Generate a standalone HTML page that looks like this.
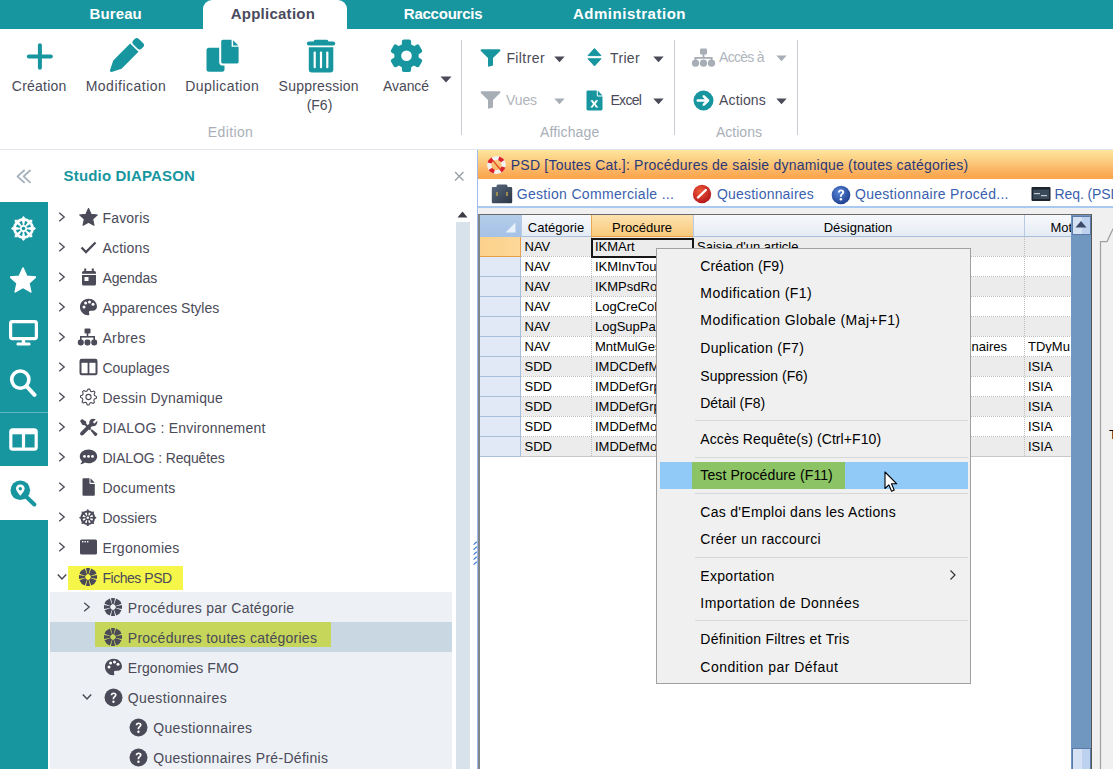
<!DOCTYPE html>
<html><head><meta charset="utf-8"><style>
html,body{margin:0;padding:0;}
body{width:1113px;height:769px;position:relative;overflow:hidden;background:#fff;font-family:"Liberation Sans",sans-serif;}
.t{position:absolute;white-space:nowrap;}
.b{position:absolute;display:block;}
</style></head><body>
<div class="b" style="left:0px;top:0px;width:1113px;height:28.6px;background:#1896a0;"></div>
<div class="b" style="left:203px;top:0px;width:144px;height:29px;background:#fff;border-radius:9px 9px 0 0;"></div>
<div class="t" style="left:-34.3px;width:300px;text-align:center;top:6.10px;font-size:15px;color:#fff;font-weight:700;line-height:15px;letter-spacing:0.12px;">Bureau</div>
<div class="t" style="left:122.89999999999998px;width:300px;text-align:center;top:6.10px;font-size:15px;color:#4a4a5e;font-weight:700;line-height:15px;letter-spacing:0.26px;">Application</div>
<div class="t" style="left:293.1px;width:300px;text-align:center;top:6.10px;font-size:15px;color:#fff;font-weight:700;line-height:15px;letter-spacing:-0.23px;">Raccourcis</div>
<div class="t" style="left:479.5px;width:300px;text-align:center;top:6.10px;font-size:15px;color:#fff;font-weight:700;line-height:15px;letter-spacing:0.51px;">Administration</div>
<div class="b" style="left:0px;top:149px;width:1113px;height:1px;background:#dfe5ea;"></div>
<svg class="b" style="left:26px;top:43px;" width="28" height="28" viewBox="0 0 28 28"><rect x="0.8" y="11.4" width="26" height="4" rx="2" fill="#1896a0"/><rect x="11.9" y="0.3" width="4" height="26.5" rx="2" fill="#1896a0"/></svg>
<div class="t" style="left:-110.8px;width:300px;text-align:center;top:78.95px;font-size:14px;color:#4a4a58;font-weight:400;line-height:14px;letter-spacing:0.235px;">Création</div>
<svg class="b" style="left:108px;top:37px;" width="37" height="37" viewBox="-18.5 -18.5 37 37"><g transform="translate(-0.6 0.6) rotate(45)" fill="#1896a0"><rect x="-5.9" y="-21.3" width="11.8" height="7.8" rx="3"/><path d="M-5.9 -11.9 H5.9 V12 L1.2 21.3 Q0 22.8 -1.2 21.3 L-5.9 12 Z"/></g></svg>
<div class="t" style="left:-24px;width:300px;text-align:center;top:78.95px;font-size:14px;color:#4a4a58;font-weight:400;line-height:14px;letter-spacing:0.5px;">Modification</div>
<svg class="b" style="left:205px;top:38px;" width="36" height="36" viewBox="0 0 36 36"><rect x="1.5" y="9.8" width="18" height="24" rx="2.5" fill="#1896a0"/><path d="M15.2 0.8 H26.8 L34.6 8.6 V23.9 Q34.6 26.6 31.9 26.6 H17.9 Q15.2 26.6 15.2 23.9 V3.5 Q15.2 0.8 17.9 0.8 Z" fill="#1896a0" stroke="#fff" stroke-width="2"/><path d="M26.6 1.3 L34.1 8.8 H26.6 Z" fill="#fff"/><path d="M28.1 2.2 L33.3 7.4 H28.1 Z" fill="#1896a0"/></svg>
<div class="t" style="left:72.19999999999999px;width:300px;text-align:center;top:78.95px;font-size:14px;color:#4a4a58;font-weight:400;line-height:14px;letter-spacing:0.43px;">Duplication</div>
<svg class="b" style="left:305px;top:38px;" width="32" height="36" viewBox="0 0 32 36"><rect x="1.9" y="3.5" width="28.3" height="4.1" rx="2" fill="#1896a0"/><rect x="8.8" y="1.7" width="14.5" height="4" rx="1.5" fill="#1896a0"/><path d="M3.8 9.2 H28.3 V31.4 Q28.3 34.4 25.3 34.4 H6.8 Q3.8 34.4 3.8 31.4 Z" fill="#1896a0"/><rect x="8.6" y="13.6" width="2.2" height="16.6" rx="1" fill="#fff"/><rect x="14.9" y="13.6" width="2.2" height="16.6" rx="1" fill="#fff"/><rect x="21.2" y="13.6" width="2.2" height="16.6" rx="1" fill="#fff"/></svg>
<div class="t" style="left:168.7px;width:300px;text-align:center;top:78.95px;font-size:14px;color:#4a4a58;font-weight:400;line-height:14px;letter-spacing:0.216px;">Suppression</div>
<div class="t" style="left:169.5px;width:300px;text-align:center;top:98.15px;font-size:14px;color:#4a4a58;font-weight:400;line-height:14px;">(F6)</div>
<svg class="b" style="left:389px;top:38px;" width="35" height="36" viewBox="-17.5 -17.8 35 36"><g fill="#1896a0"><circle r="12.2"/><rect x="-4.6" y="-16.3" width="9.2" height="10" rx="2" transform="rotate(0)"/><rect x="-4.6" y="-16.3" width="9.2" height="10" rx="2" transform="rotate(60)"/><rect x="-4.6" y="-16.3" width="9.2" height="10" rx="2" transform="rotate(120)"/><rect x="-4.6" y="-16.3" width="9.2" height="10" rx="2" transform="rotate(180)"/><rect x="-4.6" y="-16.3" width="9.2" height="10" rx="2" transform="rotate(240)"/><rect x="-4.6" y="-16.3" width="9.2" height="10" rx="2" transform="rotate(300)"/></g><circle r="5.3" fill="#fff"/></svg>
<div class="t" style="left:256px;width:300px;text-align:center;top:78.95px;font-size:14px;color:#4a4a58;font-weight:400;line-height:14px;letter-spacing:-0.07px;">Avancé</div>
<svg class="b" style="left:440px;top:76px;" width="12" height="7" viewBox="0 0 12 7"><path d="M0.5 0.5 H11.5 L6 6.5 Z" fill="#4a4a58"/></svg>
<div class="b" style="left:461px;top:40px;width:1px;height:95px;background:#c9ccd2;"></div>
<div class="b" style="left:674px;top:40px;width:1px;height:95px;background:#c9ccd2;"></div>
<div class="b" style="left:797px;top:40px;width:1px;height:95px;background:#c9ccd2;"></div>
<div class="t" style="left:80.5px;width:300px;text-align:center;top:125.15px;font-size:14px;color:#a9afb8;font-weight:400;line-height:14px;letter-spacing:0.37px;">Edition</div>
<div class="t" style="left:419.70000000000005px;width:300px;text-align:center;top:125.15px;font-size:14px;color:#a9afb8;font-weight:400;line-height:14px;letter-spacing:0.13px;">Affichage</div>
<div class="t" style="left:589px;width:300px;text-align:center;top:125.15px;font-size:14px;color:#a9afb8;font-weight:400;line-height:14px;">Actions</div>
<svg class="b" style="left:480px;top:48.5px;" width="21" height="18" viewBox="0 0 21 18"><path d="M0.6 1.2 Q0.6 0.3 1.6 0.3 H19.4 Q20.4 0.3 20.4 1.2 Q20.4 1.8 19.9 2.3 L13 9 V15.5 Q13 16.3 12.4 16.8 L9.2 17.6 Q8 17.9 8 16.7 V9 L1.1 2.3 Q0.6 1.8 0.6 1.2 Z" fill="#1896a0"/></svg>
<div class="t" style="left:506.4px;top:50.75px;font-size:14px;color:#4a4a58;font-weight:400;line-height:14px;letter-spacing:0.4px;">Filtrer</div>
<svg class="b" style="left:554px;top:55.5px;" width="11" height="7" viewBox="0 0 11 7"><path d="M0.3 0.5 H10.7 L5.5 6.3 Z" fill="#4a4a58"/></svg>
<svg class="b" style="left:587px;top:48px;" width="15" height="19" viewBox="0 0 15 19"><path d="M7.5 0.6 L14 7.6 H1 Z M1 10.8 H14 L7.5 17.9 Z" fill="#1896a0" stroke="#1896a0" stroke-width="1" stroke-linejoin="round"/></svg>
<div class="t" style="left:610px;top:50.75px;font-size:14px;color:#4a4a58;font-weight:400;line-height:14px;letter-spacing:0.35px;">Trier</div>
<svg class="b" style="left:653px;top:55.5px;" width="11" height="7" viewBox="0 0 11 7"><path d="M0.3 0.5 H10.7 L5.5 6.3 Z" fill="#4a4a58"/></svg>
<svg class="b" style="left:480px;top:91px;" width="21" height="18" viewBox="0 0 21 18"><path d="M0.6 1.2 Q0.6 0.3 1.6 0.3 H19.4 Q20.4 0.3 20.4 1.2 Q20.4 1.8 19.9 2.3 L13 9 V15.5 Q13 16.3 12.4 16.8 L9.2 17.6 Q8 17.9 8 16.7 V9 L1.1 2.3 Q0.6 1.8 0.6 1.2 Z" fill="#a8aeb6"/></svg>
<div class="t" style="left:506px;top:92.65px;font-size:14px;color:#b0b5bc;font-weight:400;line-height:14px;letter-spacing:-0.1px;">Vues</div>
<svg class="b" style="left:554px;top:97.5px;" width="11" height="7" viewBox="0 0 11 7"><path d="M0.3 0.5 H10.7 L5.5 6.3 Z" fill="#a8aeb6"/></svg>
<svg class="b" style="left:586px;top:89.5px;" width="17" height="21" viewBox="0 0 17 21"><path d="M0.5 1.8 Q0.5 0.4 1.9 0.4 H10.8 V5.2 Q10.8 6.5 12 6.5 H16.5 V19 Q16.5 20.4 15.1 20.4 H1.9 Q0.5 20.4 0.5 19 Z M11.8 0.4 L16.5 5.4 H11.8 Z" fill="#1896a0"/><path d="M4.4 10.3 H6.9 L8.3 12.6 L9.7 10.3 H12.2 L9.6 13.9 L12.4 17.4 H9.9 L8.3 15 L6.7 17.4 H4.2 L7 13.9 Z" fill="#fff"/></svg>
<div class="t" style="left:610.5px;top:92.95px;font-size:14px;color:#4a4a58;font-weight:400;line-height:14px;letter-spacing:-0.72px;">Excel</div>
<svg class="b" style="left:653px;top:97.5px;" width="11" height="7" viewBox="0 0 11 7"><path d="M0.3 0.5 H10.7 L5.5 6.3 Z" fill="#4a4a58"/></svg>
<svg class="b" style="left:691px;top:48px;" width="25" height="19" viewBox="0 0 25 19"><g fill="#a8aeb6"><rect x="9" y="0.5" width="7" height="6" rx="1.2"/><rect x="11.6" y="6" width="1.8" height="4"/><rect x="3.6" y="9" width="17.8" height="1.8"/><rect x="3.6" y="9" width="1.8" height="4"/><rect x="19.6" y="9" width="1.8" height="4"/><circle cx="4.5" cy="15.2" r="3.6"/><circle cx="12.5" cy="15.2" r="3.6"/><circle cx="20.5" cy="15.2" r="3.6"/></g></svg>
<div class="t" style="left:719px;top:50.15px;font-size:14px;color:#b0b5bc;font-weight:400;line-height:14px;letter-spacing:-0.69px;">Accès à</div>
<svg class="b" style="left:776px;top:54.5px;" width="11" height="7" viewBox="0 0 11 7"><path d="M0.3 0.5 H10.7 L5.5 6.3 Z" fill="#a8aeb6"/></svg>
<svg class="b" style="left:692.5px;top:89.5px;" width="21" height="21" viewBox="0 0 21 21"><circle cx="10.5" cy="10.5" r="10" fill="#1896a0"/><path d="M4.8 10.5 H14.8 M10.8 6.3 L15 10.5 L10.8 14.7" stroke="#fff" stroke-width="2.6" fill="none" stroke-linecap="round" stroke-linejoin="round"/></svg>
<div class="t" style="left:719px;top:93.15px;font-size:14px;color:#4a4a58;font-weight:400;line-height:14px;letter-spacing:0.15px;">Actions</div>
<svg class="b" style="left:776px;top:97.5px;" width="11" height="7" viewBox="0 0 11 7"><path d="M0.3 0.5 H10.7 L5.5 6.3 Z" fill="#4a4a58"/></svg>
<svg class="b" style="left:15px;top:168px;" width="17" height="17" viewBox="0 0 17 17"><path d="M9.1 2.5 L2.5 8.4 L9.1 14.3 M15 2.5 L8.6 8.4 L15 14.3" fill="none" stroke="#a4b0bc" stroke-width="1.8" stroke-linecap="round" stroke-linejoin="round"/></svg>
<div class="t" style="left:63.6px;top:168.30px;font-size:15px;color:#1896a0;font-weight:700;line-height:15px;letter-spacing:0.167px;">Studio DIAPASON</div>
<svg class="b" style="left:453.5px;top:171px;" width="10.5" height="10.5" viewBox="0 0 10 10"><path d="M1 1 L9 9 M9 1 L1 9" stroke="#9aa0a8" stroke-width="1.3"/></svg>
<div class="b" style="left:0px;top:202px;width:48px;height:264px;background:#1896a0;"></div>
<div class="b" style="left:0px;top:412px;width:48px;height:1px;background:#5fb8bf;"></div>
<div class="b" style="left:0px;top:520px;width:48px;height:249px;background:#1896a0;"></div>
<svg class="b" style="left:10.7px;top:215.7px;" width="25" height="25" viewBox="-12.5 -12.5 25 25"><g fill="#fff"><circle r="10.40"/><path d="M-2.20 -10.00 L0 -12.50 L2.20 -10.00 Z" transform="rotate(0)"/><path d="M-2.20 -10.00 L0 -12.50 L2.20 -10.00 Z" transform="rotate(45)"/><path d="M-2.20 -10.00 L0 -12.50 L2.20 -10.00 Z" transform="rotate(90)"/><path d="M-2.20 -10.00 L0 -12.50 L2.20 -10.00 Z" transform="rotate(135)"/><path d="M-2.20 -10.00 L0 -12.50 L2.20 -10.00 Z" transform="rotate(180)"/><path d="M-2.20 -10.00 L0 -12.50 L2.20 -10.00 Z" transform="rotate(225)"/><path d="M-2.20 -10.00 L0 -12.50 L2.20 -10.00 Z" transform="rotate(270)"/><path d="M-2.20 -10.00 L0 -12.50 L2.20 -10.00 Z" transform="rotate(315)"/></g><g fill="#1896a0"><path d="M0.69 -3.53 L1.45 -7.46 A7.6 7.6 0 0 1 4.25 -6.30 L2.01 -2.98 A3.6 3.6 0 0 0 0.69 -3.53 Z"/><path d="M2.98 -2.01 L6.30 -4.25 A7.6 7.6 0 0 1 7.46 -1.45 L3.53 -0.69 A3.6 3.6 0 0 0 2.98 -2.01 Z"/><path d="M3.53 0.69 L7.46 1.45 A7.6 7.6 0 0 1 6.30 4.25 L2.98 2.01 A3.6 3.6 0 0 0 3.53 0.69 Z"/><path d="M2.01 2.98 L4.25 6.30 A7.6 7.6 0 0 1 1.45 7.46 L0.69 3.53 A3.6 3.6 0 0 0 2.01 2.98 Z"/><path d="M-0.69 3.53 L-1.45 7.46 A7.6 7.6 0 0 1 -4.25 6.30 L-2.01 2.98 A3.6 3.6 0 0 0 -0.69 3.53 Z"/><path d="M-2.98 2.01 L-6.30 4.25 A7.6 7.6 0 0 1 -7.46 1.45 L-3.53 0.69 A3.6 3.6 0 0 0 -2.98 2.01 Z"/><path d="M-3.53 -0.69 L-7.46 -1.45 A7.6 7.6 0 0 1 -6.30 -4.25 L-2.98 -2.01 A3.6 3.6 0 0 0 -3.53 -0.69 Z"/><path d="M-2.01 -2.98 L-4.25 -6.30 A7.6 7.6 0 0 1 -1.45 -7.46 L-0.69 -3.53 A3.6 3.6 0 0 0 -2.01 -2.98 Z"/><circle r="1.80"/></g></svg>
<svg class="b" style="left:10px;top:267px;" width="26" height="26" viewBox="0 0 26 26"><path d="M13.00,1.00 L16.64,9.18 L25.55,10.12 L18.90,16.12 L20.76,24.88 L13.00,20.40 L5.24,24.88 L7.10,16.12 L0.45,10.12 L9.36,9.18 Z" fill="#fff" stroke="#fff" stroke-width="1.6" stroke-linejoin="round"/></svg>
<svg class="b" style="left:8.5px;top:320px;" width="29" height="27" viewBox="0 0 29 27"><rect x="1.6" y="1.6" width="25.8" height="17" rx="1.8" fill="none" stroke="#fff" stroke-width="3.2"/><rect x="12.8" y="19" width="3.4" height="4.5" fill="#fff"/><rect x="7.5" y="22.5" width="14" height="3" rx="1.3" fill="#fff"/></svg>
<svg class="b" style="left:9px;top:368px;" width="28" height="31" viewBox="0 0 28 31"><circle cx="11.3" cy="11.6" r="8.6" fill="none" stroke="#fff" stroke-width="3.6"/><line x1="17.8" y1="18.5" x2="25.5" y2="26.8" stroke="#fff" stroke-width="4" stroke-linecap="round"/></svg>
<svg class="b" style="left:8.5px;top:428px;" width="29" height="23" viewBox="0 0 29 23"><rect x="1.8" y="1.8" width="25.4" height="19.4" rx="2" fill="none" stroke="#fff" stroke-width="3.2"/><rect x="1.8" y="1.8" width="25.4" height="4.5" fill="#fff"/><rect x="12.9" y="2" width="3.2" height="19" fill="#fff"/></svg>
<svg class="b" style="left:10px;top:480px;" width="27" height="27" viewBox="0 0 27 27"><circle cx="10.3" cy="10.3" r="9.8" fill="#1896a0"/><line x1="16" y1="16.5" x2="24.3" y2="24.5" stroke="#1896a0" stroke-width="4" stroke-linecap="round"/><path d="M10.3 4.5 C7.4 4.5 6 6.5 6 8.6 C6 11.2 10.3 15.8 10.3 15.8 C10.3 15.8 14.6 11.2 14.6 8.6 C14.6 6.5 13.2 4.5 10.3 4.5 Z" fill="#fff"/><circle cx="10.3" cy="8.8" r="1.7" fill="#1896a0"/></svg>
<div class="b" style="left:50px;top:592px;width:402px;height:177px;background:#edf1f5;"></div>
<div class="b" style="left:50px;top:622px;width:402px;height:30px;background:#c9d7e2;"></div>
<div class="b" style="left:68px;top:566px;width:115px;height:24px;background:#f6f64a;"></div>
<div class="b" style="left:95px;top:622px;width:236px;height:25px;background:#c6d65a;"></div>
<div class="b" style="left:456px;top:205px;width:14px;height:564px;background:#fff;"></div>
<svg class="b" style="left:457px;top:210.5px;" width="11" height="7" viewBox="0 0 11 7"><path d="M0.5 6.5 L5.5 0.5 L10.5 6.5 Z" fill="#3c3c44"/></svg>
<div class="b" style="left:456px;top:222px;width:14px;height:547px;background:#d8e2ea;"></div>
<div class="b" style="left:477px;top:150px;width:1px;height:619px;background:#9dbde8;"></div>
<svg class="b" style="left:473px;top:541px;" width="5" height="26" viewBox="0 0 5 26"><path d="M0.6 3.6 L3.8 0.8" stroke="#3a78d8" stroke-width="1.2"/><path d="M0.6 8.6 L3.8 5.8" stroke="#3a78d8" stroke-width="1.2"/><path d="M0.6 13.6 L3.8 10.8" stroke="#3a78d8" stroke-width="1.2"/><path d="M0.6 18.6 L3.8 15.8" stroke="#3a78d8" stroke-width="1.2"/><path d="M0.6 23.6 L3.8 20.8" stroke="#3a78d8" stroke-width="1.2"/></svg>
<svg class="b" style="left:57.5px;top:211.7px;" width="8" height="10" viewBox="0 0 8 10"><path d="M1.2 0.8 L6.2 5 L1.2 9.2" fill="none" stroke="#4a4a58" stroke-width="1.3"/></svg>
<svg class="b" style="left:78.5px;top:207.89999999999998px;" width="19" height="18" viewBox="0 0 19 18"><path d="M9.50,0.50 L12.09,6.24 L18.34,6.93 L13.68,11.16 L14.97,17.32 L9.50,14.20 L4.03,17.32 L5.32,11.16 L0.66,6.93 L6.91,6.24 Z" fill="#4a4a58" stroke="#4a4a58" stroke-width="1.1" stroke-linejoin="round"/></svg>
<div class="t" style="left:102.4px;top:210.85px;font-size:14px;color:#4a4a58;font-weight:400;line-height:14px;letter-spacing:0.21px;">Favoris</div>
<svg class="b" style="left:57.5px;top:241.7px;" width="8" height="10" viewBox="0 0 8 10"><path d="M1.2 0.8 L6.2 5 L1.2 9.2" fill="none" stroke="#4a4a58" stroke-width="1.3"/></svg>
<svg class="b" style="left:78.5px;top:237.89999999999998px;" width="19" height="18" viewBox="0 0 19 18"><path d="M2.5 9.5 L7 14 L16.5 4.5" fill="none" stroke="#4a4a58" stroke-width="2.3"/></svg>
<div class="t" style="left:102.4px;top:240.85px;font-size:14px;color:#4a4a58;font-weight:400;line-height:14px;letter-spacing:0.21px;">Actions</div>
<svg class="b" style="left:57.5px;top:271.7px;" width="8" height="10" viewBox="0 0 8 10"><path d="M1.2 0.8 L6.2 5 L1.2 9.2" fill="none" stroke="#4a4a58" stroke-width="1.3"/></svg>
<svg class="b" style="left:78.5px;top:267.9px;" width="19" height="18" viewBox="0 0 19 18"><rect x="3" y="3" width="14" height="14.5" rx="1.5" fill="#4a4a58"/><rect x="5.2" y="0.5" width="2" height="3" fill="#4a4a58"/><rect x="12.8" y="0.5" width="2" height="3" fill="#4a4a58"/><rect x="3" y="5.8" width="14" height="1.2" fill="#fff"/><rect x="5.5" y="9" width="4" height="4" fill="#fff"/></svg>
<div class="t" style="left:102.4px;top:270.85px;font-size:14px;color:#4a4a58;font-weight:400;line-height:14px;letter-spacing:-0.07px;">Agendas</div>
<svg class="b" style="left:57.5px;top:301.7px;" width="8" height="10" viewBox="0 0 8 10"><path d="M1.2 0.8 L6.2 5 L1.2 9.2" fill="none" stroke="#4a4a58" stroke-width="1.3"/></svg>
<svg class="b" style="left:78.5px;top:297.9px;" width="19" height="18" viewBox="0 0 19 18"><path d="M9.5 0.8 C4.5 0.8 1 4.5 1 9 C1 13.5 4.6 17.3 9 17.3 C10.3 17.3 10.6 16.3 10.2 15.4 C9.6 14.2 10 12.8 11.6 12.8 H13.6 C16.2 12.8 18 11 18 8.5 C18 4.2 14.4 0.8 9.5 0.8 Z" fill="#4a4a58"/><circle cx="5" cy="9" r="1.5" fill="#fff"/><circle cx="6.6" cy="5" r="1.5" fill="#fff"/><circle cx="10.5" cy="3.9" r="1.5" fill="#fff"/><circle cx="14" cy="6.3" r="1.5" fill="#fff"/></svg>
<div class="t" style="left:102.4px;top:300.85px;font-size:14px;color:#4a4a58;font-weight:400;line-height:14px;letter-spacing:0.01px;">Apparences Styles</div>
<svg class="b" style="left:57.5px;top:331.7px;" width="8" height="10" viewBox="0 0 8 10"><path d="M1.2 0.8 L6.2 5 L1.2 9.2" fill="none" stroke="#4a4a58" stroke-width="1.3"/></svg>
<svg class="b" style="left:77.0px;top:327.9px;" width="21" height="18" viewBox="0 0 21 18"><g fill="#4a4a58"><rect x="7.5" y="0.5" width="6" height="5" rx="1"/><rect x="9.7" y="5" width="1.6" height="4"/><rect x="3" y="8" width="15" height="1.6"/><rect x="3" y="8" width="1.6" height="4"/><rect x="16.4" y="8" width="1.6" height="4"/><rect x="0.8" y="11.5" width="6" height="6" rx="2.4"/><rect x="7.5" y="11.5" width="6" height="6" rx="2.4"/><rect x="14.2" y="11.5" width="6" height="6" rx="2.4"/></g></svg>
<div class="t" style="left:102.4px;top:330.85px;font-size:14px;color:#4a4a58;font-weight:400;line-height:14px;letter-spacing:0.38px;">Arbres</div>
<svg class="b" style="left:57.5px;top:361.7px;" width="8" height="10" viewBox="0 0 8 10"><path d="M1.2 0.8 L6.2 5 L1.2 9.2" fill="none" stroke="#4a4a58" stroke-width="1.3"/></svg>
<svg class="b" style="left:78.5px;top:357.9px;" width="19" height="18" viewBox="0 0 19 18"><rect x="1.5" y="1.8" width="16" height="14.4" rx="1.2" fill="none" stroke="#4a4a58" stroke-width="2"/><rect x="1.5" y="1.8" width="16" height="3" fill="#4a4a58"/><rect x="8.6" y="2" width="1.8" height="14" fill="#4a4a58"/></svg>
<div class="t" style="left:102.4px;top:360.85px;font-size:14px;color:#4a4a58;font-weight:400;line-height:14px;letter-spacing:0.01px;">Couplages</div>
<svg class="b" style="left:57.5px;top:391.7px;" width="8" height="10" viewBox="0 0 8 10"><path d="M1.2 0.8 L6.2 5 L1.2 9.2" fill="none" stroke="#4a4a58" stroke-width="1.3"/></svg>
<svg class="b" style="left:78.5px;top:387.9px;" width="19" height="18" viewBox="0 0 19 18"><path d="M9.11,1.01 L10.67,1.09 L11.59,3.16 L12.69,3.68 L14.87,3.07 L15.93,4.23 L15.10,6.35 L15.51,7.49 L17.49,8.61 L17.41,10.17 L15.34,11.09 L14.82,12.19 L15.43,14.37 L14.27,15.43 L12.15,14.60 L11.01,15.01 L9.89,16.99 L8.33,16.91 L7.41,14.84 L6.31,14.32 L4.13,14.93 L3.07,13.77 L3.90,11.65 L3.49,10.51 L1.51,9.39 L1.59,7.83 L3.66,6.91 L4.18,5.81 L3.57,3.63 L4.73,2.57 L6.85,3.40 L7.99,2.99 Z" fill="none" stroke="#4a4a58" stroke-width="1.1" stroke-linejoin="round"/><circle cx="9.5" cy="9" r="2.6" fill="none" stroke="#4a4a58" stroke-width="1.1"/></svg>
<div class="t" style="left:102.4px;top:390.85px;font-size:14px;color:#4a4a58;font-weight:400;line-height:14px;letter-spacing:0.2px;">Dessin Dynamique</div>
<svg class="b" style="left:57.5px;top:421.7px;" width="8" height="10" viewBox="0 0 8 10"><path d="M1.2 0.8 L6.2 5 L1.2 9.2" fill="none" stroke="#4a4a58" stroke-width="1.3"/></svg>
<svg class="b" style="left:78.5px;top:417.9px;" width="19" height="19" viewBox="0 0 19 19"><path d="M3 1 L1 3 L3.5 7 L5.8 7.3 L10.8 12.3 L12.3 10.8 L7.3 5.8 L7 3.5 Z" fill="#4a4a58"/><path d="M11.5 12.5 L15.5 17.5 Q16.5 18.5 17.5 17.5 L17.8 17.2 Q18.8 16.2 17.8 15.2 L12.8 11.2 Z" fill="#4a4a58"/><path d="M16.8 1.2 L14 4 L14.5 5 L15.5 5.5 L18.3 2.7 Q18.8 5.5 17 7.2 Q15.3 8.8 13 8.2 L4.5 16.7 Q3 18.2 1.7 16.9 Q0.4 15.6 1.9 14.1 L10.4 5.6 Q9.8 3.3 11.4 1.7 Q13.2 -0.1 16.8 1.2 Z" fill="#4a4a58"/></svg>
<div class="t" style="left:102.4px;top:420.85px;font-size:14px;color:#4a4a58;font-weight:400;line-height:14px;letter-spacing:0.2px;">DIALOG : Environnement</div>
<svg class="b" style="left:57.5px;top:451.7px;" width="8" height="10" viewBox="0 0 8 10"><path d="M1.2 0.8 L6.2 5 L1.2 9.2" fill="none" stroke="#4a4a58" stroke-width="1.3"/></svg>
<svg class="b" style="left:78.5px;top:447.9px;" width="19" height="18" viewBox="0 0 19 18"><path d="M9.5 1.5 C4.5 1.5 0.8 4.6 0.8 8.4 C0.8 10.2 1.6 11.8 3 13 C2.8 14.6 1.5 16 1.3 16.2 C3.5 16.2 5.2 15.2 6 14.6 C7 15 8.2 15.2 9.5 15.2 C14.5 15.2 18.2 12.1 18.2 8.4 C18.2 4.6 14.5 1.5 9.5 1.5 Z" fill="#4a4a58"/><circle cx="5.5" cy="8.4" r="1.4" fill="#fff"/><circle cx="9.5" cy="8.4" r="1.4" fill="#fff"/><circle cx="13.5" cy="8.4" r="1.4" fill="#fff"/></svg>
<div class="t" style="left:102.4px;top:450.85px;font-size:14px;color:#4a4a58;font-weight:400;line-height:14px;letter-spacing:-0.14px;">DIALOG : Requêtes</div>
<svg class="b" style="left:57.5px;top:481.7px;" width="8" height="10" viewBox="0 0 8 10"><path d="M1.2 0.8 L6.2 5 L1.2 9.2" fill="none" stroke="#4a4a58" stroke-width="1.3"/></svg>
<svg class="b" style="left:78.5px;top:477.9px;" width="19" height="18" viewBox="0 0 19 18"><path d="M3.5 1.2 Q3.5 0.3 4.4 0.3 H10.5 V5.2 Q10.5 6 11.3 6 H15.8 V16.8 Q15.8 17.7 14.9 17.7 H4.4 Q3.5 17.7 3.5 16.8 Z M11.5 0.3 L15.8 4.8 H11.5 Z" fill="#4a4a58"/></svg>
<div class="t" style="left:102.4px;top:480.85px;font-size:14px;color:#4a4a58;font-weight:400;line-height:14px;letter-spacing:0.26px;">Documents</div>
<svg class="b" style="left:57.5px;top:511.70000000000005px;" width="8" height="10" viewBox="0 0 8 10"><path d="M1.2 0.8 L6.2 5 L1.2 9.2" fill="none" stroke="#4a4a58" stroke-width="1.3"/></svg>
<svg class="b" style="left:79.3px;top:508.50000000000006px;" width="17.6" height="17.6" viewBox="-8.8 -8.8 17.6 17.6"><g fill="#4a4a58"><circle r="7.32"/><path d="M-1.55 -7.04 L0 -8.80 L1.55 -7.04 Z" transform="rotate(0)"/><path d="M-1.55 -7.04 L0 -8.80 L1.55 -7.04 Z" transform="rotate(45)"/><path d="M-1.55 -7.04 L0 -8.80 L1.55 -7.04 Z" transform="rotate(90)"/><path d="M-1.55 -7.04 L0 -8.80 L1.55 -7.04 Z" transform="rotate(135)"/><path d="M-1.55 -7.04 L0 -8.80 L1.55 -7.04 Z" transform="rotate(180)"/><path d="M-1.55 -7.04 L0 -8.80 L1.55 -7.04 Z" transform="rotate(225)"/><path d="M-1.55 -7.04 L0 -8.80 L1.55 -7.04 Z" transform="rotate(270)"/><path d="M-1.55 -7.04 L0 -8.80 L1.55 -7.04 Z" transform="rotate(315)"/></g><g fill="#fff"><path d="M0.48 -2.49 L1.02 -5.25 A5.3504000000000005 5.3504000000000005 0 0 1 2.99 -4.44 L1.42 -2.10 A2.5344 2.5344 0 0 0 0.48 -2.49 Z"/><path d="M2.10 -1.42 L4.44 -2.99 A5.3504000000000005 5.3504000000000005 0 0 1 5.25 -1.02 L2.49 -0.48 A2.5344 2.5344 0 0 0 2.10 -1.42 Z"/><path d="M2.49 0.48 L5.25 1.02 A5.3504000000000005 5.3504000000000005 0 0 1 4.44 2.99 L2.10 1.42 A2.5344 2.5344 0 0 0 2.49 0.48 Z"/><path d="M1.42 2.10 L2.99 4.44 A5.3504000000000005 5.3504000000000005 0 0 1 1.02 5.25 L0.48 2.49 A2.5344 2.5344 0 0 0 1.42 2.10 Z"/><path d="M-0.48 2.49 L-1.02 5.25 A5.3504000000000005 5.3504000000000005 0 0 1 -2.99 4.44 L-1.42 2.10 A2.5344 2.5344 0 0 0 -0.48 2.49 Z"/><path d="M-2.10 1.42 L-4.44 2.99 A5.3504000000000005 5.3504000000000005 0 0 1 -5.25 1.02 L-2.49 0.48 A2.5344 2.5344 0 0 0 -2.10 1.42 Z"/><path d="M-2.49 -0.48 L-5.25 -1.02 A5.3504000000000005 5.3504000000000005 0 0 1 -4.44 -2.99 L-2.10 -1.42 A2.5344 2.5344 0 0 0 -2.49 -0.48 Z"/><path d="M-1.42 -2.10 L-2.99 -4.44 A5.3504000000000005 5.3504000000000005 0 0 1 -1.02 -5.25 L-0.48 -2.49 A2.5344 2.5344 0 0 0 -1.42 -2.10 Z"/><circle r="1.27"/></g></svg>
<div class="t" style="left:102.4px;top:510.85px;font-size:14px;color:#4a4a58;font-weight:400;line-height:14px;">Dossiers</div>
<svg class="b" style="left:57.5px;top:541.7px;" width="8" height="10" viewBox="0 0 8 10"><path d="M1.2 0.8 L6.2 5 L1.2 9.2" fill="none" stroke="#4a4a58" stroke-width="1.3"/></svg>
<svg class="b" style="left:78.5px;top:537.9000000000001px;" width="19" height="18" viewBox="0 0 19 18"><rect x="1" y="1.5" width="17" height="15" rx="1.5" fill="#4a4a58"/><rect x="3" y="3" width="1.4" height="1.4" fill="#fff"/><rect x="5.5" y="3" width="1.4" height="1.4" fill="#fff"/><rect x="8" y="3" width="1.4" height="1.4" fill="#fff"/></svg>
<div class="t" style="left:102.4px;top:540.85px;font-size:14px;color:#4a4a58;font-weight:400;line-height:14px;letter-spacing:0.24px;">Ergonomies</div>
<svg class="b" style="left:56.5px;top:573.2px;" width="10" height="8" viewBox="0 0 10 8"><path d="M0.8 1.5 L5 6 L9.2 1.5" fill="none" stroke="#4a4a58" stroke-width="1.5"/></svg>
<svg class="b" style="left:77.9px;top:566.9000000000001px;" width="20" height="20" viewBox="-10 -10 20 20"><g fill="#4a4a58"><path d="M0.95 -2.53 L3.20 -8.52 A9.1 9.1 0 0 1 8.52 -3.20 L2.53 -0.95 A2.7 2.7 0 0 0 0.95 -2.53 Z"/><path d="M2.63 -0.63 L8.85 -2.11 A9.1 9.1 0 0 1 8.85 2.11 L2.63 0.63 A2.7 2.7 0 0 0 2.63 -0.63 Z"/><path d="M2.53 0.95 L8.52 3.20 A9.1 9.1 0 0 1 3.20 8.52 L0.95 2.53 A2.7 2.7 0 0 0 2.53 0.95 Z"/><path d="M0.63 2.63 L2.11 8.85 A9.1 9.1 0 0 1 -2.11 8.85 L-0.63 2.63 A2.7 2.7 0 0 0 0.63 2.63 Z"/><path d="M-0.95 2.53 L-3.20 8.52 A9.1 9.1 0 0 1 -8.52 3.20 L-2.53 0.95 A2.7 2.7 0 0 0 -0.95 2.53 Z"/><path d="M-2.63 0.63 L-8.85 2.11 A9.1 9.1 0 0 1 -8.85 -2.11 L-2.63 -0.63 A2.7 2.7 0 0 0 -2.63 0.63 Z"/><path d="M-2.53 -0.95 L-8.52 -3.20 A9.1 9.1 0 0 1 -3.20 -8.52 L-0.95 -2.53 A2.7 2.7 0 0 0 -2.53 -0.95 Z"/><path d="M-0.63 -2.63 L-2.11 -8.85 A9.1 9.1 0 0 1 2.11 -8.85 L0.63 -2.63 A2.7 2.7 0 0 0 -0.63 -2.63 Z"/></g></svg>
<div class="t" style="left:102.4px;top:570.85px;font-size:14px;color:#4a4a58;font-weight:400;line-height:14px;letter-spacing:-0.46px;">Fiches PSD</div>
<svg class="b" style="left:82.5px;top:601.7px;" width="8" height="10" viewBox="0 0 8 10"><path d="M1.2 0.8 L6.2 5 L1.2 9.2" fill="none" stroke="#4a4a58" stroke-width="1.3"/></svg>
<svg class="b" style="left:102.9px;top:596.9000000000001px;" width="20" height="20" viewBox="-10 -10 20 20"><g fill="#4a4a58"><path d="M0.95 -2.53 L3.20 -8.52 A9.1 9.1 0 0 1 8.52 -3.20 L2.53 -0.95 A2.7 2.7 0 0 0 0.95 -2.53 Z"/><path d="M2.63 -0.63 L8.85 -2.11 A9.1 9.1 0 0 1 8.85 2.11 L2.63 0.63 A2.7 2.7 0 0 0 2.63 -0.63 Z"/><path d="M2.53 0.95 L8.52 3.20 A9.1 9.1 0 0 1 3.20 8.52 L0.95 2.53 A2.7 2.7 0 0 0 2.53 0.95 Z"/><path d="M0.63 2.63 L2.11 8.85 A9.1 9.1 0 0 1 -2.11 8.85 L-0.63 2.63 A2.7 2.7 0 0 0 0.63 2.63 Z"/><path d="M-0.95 2.53 L-3.20 8.52 A9.1 9.1 0 0 1 -8.52 3.20 L-2.53 0.95 A2.7 2.7 0 0 0 -0.95 2.53 Z"/><path d="M-2.63 0.63 L-8.85 2.11 A9.1 9.1 0 0 1 -8.85 -2.11 L-2.63 -0.63 A2.7 2.7 0 0 0 -2.63 0.63 Z"/><path d="M-2.53 -0.95 L-8.52 -3.20 A9.1 9.1 0 0 1 -3.20 -8.52 L-0.95 -2.53 A2.7 2.7 0 0 0 -2.53 -0.95 Z"/><path d="M-0.63 -2.63 L-2.11 -8.85 A9.1 9.1 0 0 1 2.11 -8.85 L0.63 -2.63 A2.7 2.7 0 0 0 -0.63 -2.63 Z"/></g></svg>
<div class="t" style="left:127.80000000000001px;top:600.85px;font-size:14px;color:#4a4a58;font-weight:400;line-height:14px;letter-spacing:0.26px;">Procédures par Catégorie</div>
<svg class="b" style="left:102.9px;top:626.9000000000001px;" width="20" height="20" viewBox="-10 -10 20 20"><g fill="#4a4a58"><path d="M0.95 -2.53 L3.20 -8.52 A9.1 9.1 0 0 1 8.52 -3.20 L2.53 -0.95 A2.7 2.7 0 0 0 0.95 -2.53 Z"/><path d="M2.63 -0.63 L8.85 -2.11 A9.1 9.1 0 0 1 8.85 2.11 L2.63 0.63 A2.7 2.7 0 0 0 2.63 -0.63 Z"/><path d="M2.53 0.95 L8.52 3.20 A9.1 9.1 0 0 1 3.20 8.52 L0.95 2.53 A2.7 2.7 0 0 0 2.53 0.95 Z"/><path d="M0.63 2.63 L2.11 8.85 A9.1 9.1 0 0 1 -2.11 8.85 L-0.63 2.63 A2.7 2.7 0 0 0 0.63 2.63 Z"/><path d="M-0.95 2.53 L-3.20 8.52 A9.1 9.1 0 0 1 -8.52 3.20 L-2.53 0.95 A2.7 2.7 0 0 0 -0.95 2.53 Z"/><path d="M-2.63 0.63 L-8.85 2.11 A9.1 9.1 0 0 1 -8.85 -2.11 L-2.63 -0.63 A2.7 2.7 0 0 0 -2.63 0.63 Z"/><path d="M-2.53 -0.95 L-8.52 -3.20 A9.1 9.1 0 0 1 -3.20 -8.52 L-0.95 -2.53 A2.7 2.7 0 0 0 -2.53 -0.95 Z"/><path d="M-0.63 -2.63 L-2.11 -8.85 A9.1 9.1 0 0 1 2.11 -8.85 L0.63 -2.63 A2.7 2.7 0 0 0 -0.63 -2.63 Z"/></g></svg>
<div class="t" style="left:127.80000000000001px;top:630.85px;font-size:14px;color:#4a4a58;font-weight:400;line-height:14px;letter-spacing:0.26px;">Procédures toutes catégories</div>
<svg class="b" style="left:103.5px;top:657.9000000000001px;" width="19" height="18" viewBox="0 0 19 18"><path d="M9.5 0.8 C4.5 0.8 1 4.5 1 9 C1 13.5 4.6 17.3 9 17.3 C10.3 17.3 10.6 16.3 10.2 15.4 C9.6 14.2 10 12.8 11.6 12.8 H13.6 C16.2 12.8 18 11 18 8.5 C18 4.2 14.4 0.8 9.5 0.8 Z" fill="#4a4a58"/><circle cx="5" cy="9" r="1.5" fill="#fff"/><circle cx="6.6" cy="5" r="1.5" fill="#fff"/><circle cx="10.5" cy="3.9" r="1.5" fill="#fff"/><circle cx="14" cy="6.3" r="1.5" fill="#fff"/></svg>
<div class="t" style="left:127.80000000000001px;top:660.85px;font-size:14px;color:#4a4a58;font-weight:400;line-height:14px;letter-spacing:0.085px;">Ergonomies FMO</div>
<svg class="b" style="left:81.5px;top:693.2px;" width="10" height="8" viewBox="0 0 10 8"><path d="M0.8 1.5 L5 6 L9.2 1.5" fill="none" stroke="#4a4a58" stroke-width="1.5"/></svg>
<svg class="b" style="left:103.5px;top:687.9000000000001px;" width="19" height="19" viewBox="0 0 19 19"><circle cx="9.5" cy="9.5" r="9" fill="#4a4a58"/><path d="M6.6 7.3 Q6.8 4.4 9.6 4.4 Q12.6 4.4 12.6 7 Q12.6 8.5 10.9 9.4 Q10.3 9.8 10.3 10.8 V11.3 H8.6 V10.5 Q8.6 8.9 9.9 8.2 Q10.8 7.7 10.8 7 Q10.8 6.1 9.6 6.1 Q8.5 6.1 8.3 7.3 Z" fill="#fff"/><circle cx="9.45" cy="13.7" r="1.2" fill="#fff"/></svg>
<div class="t" style="left:127.80000000000001px;top:690.85px;font-size:14px;color:#4a4a58;font-weight:400;line-height:14px;letter-spacing:0.36px;">Questionnaires</div>
<svg class="b" style="left:128.5px;top:717.9000000000001px;" width="19" height="19" viewBox="0 0 19 19"><circle cx="9.5" cy="9.5" r="9" fill="#4a4a58"/><path d="M6.6 7.3 Q6.8 4.4 9.6 4.4 Q12.6 4.4 12.6 7 Q12.6 8.5 10.9 9.4 Q10.3 9.8 10.3 10.8 V11.3 H8.6 V10.5 Q8.6 8.9 9.9 8.2 Q10.8 7.7 10.8 7 Q10.8 6.1 9.6 6.1 Q8.5 6.1 8.3 7.3 Z" fill="#fff"/><circle cx="9.45" cy="13.7" r="1.2" fill="#fff"/></svg>
<div class="t" style="left:153.20000000000002px;top:720.85px;font-size:14px;color:#4a4a58;font-weight:400;line-height:14px;letter-spacing:0.36px;">Questionnaires</div>
<svg class="b" style="left:128.5px;top:747.9000000000001px;" width="19" height="19" viewBox="0 0 19 19"><circle cx="9.5" cy="9.5" r="9" fill="#4a4a58"/><path d="M6.6 7.3 Q6.8 4.4 9.6 4.4 Q12.6 4.4 12.6 7 Q12.6 8.5 10.9 9.4 Q10.3 9.8 10.3 10.8 V11.3 H8.6 V10.5 Q8.6 8.9 9.9 8.2 Q10.8 7.7 10.8 7 Q10.8 6.1 9.6 6.1 Q8.5 6.1 8.3 7.3 Z" fill="#fff"/><circle cx="9.45" cy="13.7" r="1.2" fill="#fff"/></svg>
<div class="t" style="left:153.20000000000002px;top:750.85px;font-size:14px;color:#4a4a58;font-weight:400;line-height:14px;letter-spacing:0.3px;">Questionnaires Pré-Définis</div>
<div class="b" style="left:478px;top:150px;width:635px;height:619px;background:#f0f0f0;"></div>
<div class="b" style="left:478px;top:149.5px;width:635px;height:29px;background:linear-gradient(#fde69c 0%, #fccb7e 40%, #fbae5a 80%, #fba44a 100%);"></div>
<svg class="b" style="left:485.5px;top:154.5px;" width="21" height="20" viewBox="-10.5 -10 21 20"><g transform="rotate(-8) scale(1,0.95)"><circle r="7.3" fill="none" stroke="#f2f2f2" stroke-width="4.2"/><path d="M-6.62 -3.09 A7.3 7.3 0 0 1 -3.09 -6.62" fill="none" stroke="#dc2228" stroke-width="4.2"/><path d="M3.09 -6.62 A7.3 7.3 0 0 1 6.62 -3.09" fill="none" stroke="#dc2228" stroke-width="4.2"/><path d="M6.62 3.09 A7.3 7.3 0 0 1 3.09 6.62" fill="none" stroke="#dc2228" stroke-width="4.2"/><path d="M-3.09 6.62 A7.3 7.3 0 0 1 -6.62 3.09" fill="none" stroke="#dc2228" stroke-width="4.2"/></g><path d="M-3.5 -4.5 Q0 0 4 4.5" stroke="#e0502a" stroke-width="1.3" fill="none"/></svg>
<div class="t" style="left:510.8px;top:158.15px;font-size:14px;color:#2a3878;font-weight:400;line-height:14px;letter-spacing:0.225px;">PSD [Toutes Cat.]: Procédures de saisie dynamique (toutes catégories)</div>
<div class="b" style="left:478px;top:178.5px;width:635px;height:28px;background:#fff;"></div>
<div class="b" style="left:478px;top:206px;width:635px;height:1.5px;background:#a9c9f0;"></div>
<svg class="b" style="left:491px;top:183px;" width="22" height="21" viewBox="0 0 22 21"><defs><linearGradient id="bc" x1="0" y1="0" x2="1" y2="1"><stop offset="0" stop-color="#5a6a80"/><stop offset="1" stop-color="#2a3444"/></linearGradient></defs><path d="M7 1.5 H15 Q16.5 1.5 16.5 3 V4 H20 Q21.2 4 21.2 5.2 V19 Q21.2 20.2 20 20.2 H2 Q0.8 20.2 0.8 19 V5.2 Q0.8 4 2 4 H5.5 V3 Q5.5 1.5 7 1.5 Z" fill="url(#bc)"/><rect x="5" y="9" width="2" height="4" fill="#9a8a50"/><rect x="15" y="9" width="2" height="4" fill="#9a8a50"/></svg>
<div class="t" style="left:516.7px;top:187.15px;font-size:14px;color:#3a5fae;font-weight:400;line-height:14px;letter-spacing:0.323px;">Gestion Commerciale ...</div>
<svg class="b" style="left:692px;top:184.3px;" width="20" height="20" viewBox="0 0 20 20"><defs><radialGradient id="rg" cx="0.4" cy="0.35" r="0.7"><stop offset="0" stop-color="#f05a3a"/><stop offset="1" stop-color="#b0141a"/></radialGradient></defs><circle cx="10" cy="10" r="9.2" fill="url(#rg)"/><path d="M6 13.5 L13.8 6" stroke="#fff" stroke-width="2.4" stroke-linecap="round"/></svg>
<div class="t" style="left:717px;top:187.15px;font-size:14px;color:#3a5fae;font-weight:400;line-height:14px;letter-spacing:0.2px;">Questionnaires</div>
<svg class="b" style="left:831px;top:184.5px;" width="20" height="20" viewBox="0 0 20 20"><defs><radialGradient id="bg2" cx="0.4" cy="0.35" r="0.7"><stop offset="0" stop-color="#5a86d8"/><stop offset="1" stop-color="#1c3c8c"/></radialGradient></defs><circle cx="10" cy="10" r="9.3" fill="url(#bg2)"/><path d="M7 7.6 Q7.2 4.6 10.1 4.6 Q13.2 4.6 13.2 7.3 Q13.2 8.9 11.4 9.8 Q10.8 10.2 10.8 11.2 V11.8 H9 V10.9 Q9 9.3 10.4 8.5 Q11.3 8 11.3 7.3 Q11.3 6.3 10.1 6.3 Q8.9 6.3 8.8 7.6 Z" fill="#fff"/><circle cx="9.9" cy="14.3" r="1.25" fill="#fff"/></svg>
<div class="t" style="left:855px;top:187.15px;font-size:14px;color:#3a5fae;font-weight:400;line-height:14px;letter-spacing:0.29px;">Questionnaire Procéd...</div>
<svg class="b" style="left:1031px;top:186px;" width="20" height="16" viewBox="0 0 20 16"><rect x="0.5" y="1" width="19" height="14" rx="1" fill="#1c2430"/><rect x="2" y="3.5" width="16" height="9.5" fill="#3a4a5a"/><rect x="3" y="7" width="6" height="1.2" fill="#c0c8d0"/><rect x="10" y="9" width="6" height="1.2" fill="#c0c8d0"/></svg>
<div class="t" style="left:1054.5px;top:187.15px;font-size:14px;color:#3a5fae;font-weight:400;line-height:14px;letter-spacing:-0.1px;">Req. (PSD)</div>
<div class="b" style="left:478px;top:214px;width:614px;height:560px;background:#fff;box-sizing:border-box;border-top:1px solid #6a6a6a;border-left:2px solid #80848c;"></div>
<div class="b" style="left:480px;top:215px;width:591px;height:22px;background:linear-gradient(#f7f9fc, #e4ebf4);"></div>
<div class="b" style="left:480px;top:236px;width:591px;height:1px;background:#a6bfdc;"></div>
<div class="b" style="left:480px;top:215px;width:41px;height:22px;background:linear-gradient(#b4cdea, #a5c1e6);"></div>
<svg class="b" style="left:505px;top:221.5px;" width="11" height="11" viewBox="0 0 11 11"><path d="M10.5 0.5 V10.5 H0.5 Z" fill="#e8f0fa"/></svg>
<div class="b" style="left:520.5px;top:215px;width:1px;height:22px;background:#b8cbe0;"></div>
<div class="b" style="left:591px;top:215px;width:102px;height:22px;background:linear-gradient(#fde2b0, #f8c878);"></div>
<div class="b" style="left:591px;top:235.5px;width:102px;height:1.5px;background:#f0a040;"></div>
<div class="b" style="left:591px;top:215px;width:1px;height:22px;background:#e8a850;"></div>
<div class="b" style="left:692.5px;top:215px;width:1px;height:22px;background:#b8cbe0;"></div>
<div class="b" style="left:1024px;top:215px;width:1px;height:22px;background:#b8cbe0;"></div>
<div class="t" style="left:406px;width:300px;text-align:center;top:220.50px;font-size:13px;color:#000;font-weight:400;line-height:13px;">Catégorie</div>
<div class="t" style="left:492px;width:300px;text-align:center;top:220.50px;font-size:13px;color:#000;font-weight:400;line-height:13px;">Procédure</div>
<div class="t" style="left:708px;width:300px;text-align:center;top:220.50px;font-size:13px;color:#000;font-weight:400;line-height:13px;">Désignation</div>
<div class="t" style="left:1050.5px;top:220.50px;font-size:13px;color:#000;font-weight:400;line-height:13px;width:20.5px;overflow:hidden;">Mot</div>
<div class="b" style="left:521px;top:237px;width:550px;height:19px;background:#ececec;"></div>
<div class="b" style="left:521px;top:256px;width:550px;height:1px;background:repeating-linear-gradient(90deg,#bdbdbd 0 1px,transparent 1px 2px);"></div>
<div class="b" style="left:591px;top:237px;width:1px;height:20px;background:repeating-linear-gradient(180deg,#bdbdbd 0 1px,transparent 1px 2px);"></div>
<div class="b" style="left:692px;top:237px;width:1px;height:20px;background:repeating-linear-gradient(180deg,#bdbdbd 0 1px,transparent 1px 2px);"></div>
<div class="b" style="left:1024px;top:237px;width:1px;height:20px;background:repeating-linear-gradient(180deg,#bdbdbd 0 1px,transparent 1px 2px);"></div>
<div class="b" style="left:480px;top:237px;width:41px;height:20px;background:linear-gradient(90deg,#fcd18c,#fdd898);box-sizing:border-box;border-bottom:1px solid #e8a04a;border-right:1px solid #e8a04a;"></div>
<div class="t" style="left:524.5px;top:240.00px;font-size:13px;color:#000;font-weight:400;line-height:13px;">NAV</div>
<div class="t" style="left:595px;top:240.00px;font-size:13px;color:#000;font-weight:400;line-height:13px;">IKMArt</div>
<div class="t" style="left:697px;top:240.00px;font-size:13px;color:#000;font-weight:400;line-height:13px;">Saisie d'un article</div>
<div class="b" style="left:521px;top:257px;width:550px;height:19px;background:#fff;"></div>
<div class="b" style="left:521px;top:276px;width:550px;height:1px;background:repeating-linear-gradient(90deg,#bdbdbd 0 1px,transparent 1px 2px);"></div>
<div class="b" style="left:591px;top:257px;width:1px;height:20px;background:repeating-linear-gradient(180deg,#bdbdbd 0 1px,transparent 1px 2px);"></div>
<div class="b" style="left:692px;top:257px;width:1px;height:20px;background:repeating-linear-gradient(180deg,#bdbdbd 0 1px,transparent 1px 2px);"></div>
<div class="b" style="left:1024px;top:257px;width:1px;height:20px;background:repeating-linear-gradient(180deg,#bdbdbd 0 1px,transparent 1px 2px);"></div>
<div class="b" style="left:480px;top:257px;width:41px;height:20px;background:#e0e9f5;box-sizing:border-box;border-bottom:1.5px solid #a9c0dc;border-right:1px solid #a9c0dc;"></div>
<div class="t" style="left:524.5px;top:260.00px;font-size:13px;color:#000;font-weight:400;line-height:13px;">NAV</div>
<div class="t" style="left:595px;top:260.00px;font-size:13px;color:#000;font-weight:400;line-height:13px;">IKMInvTour</div>
<div class="b" style="left:521px;top:277px;width:550px;height:19px;background:#ececec;"></div>
<div class="b" style="left:521px;top:296px;width:550px;height:1px;background:repeating-linear-gradient(90deg,#bdbdbd 0 1px,transparent 1px 2px);"></div>
<div class="b" style="left:591px;top:277px;width:1px;height:20px;background:repeating-linear-gradient(180deg,#bdbdbd 0 1px,transparent 1px 2px);"></div>
<div class="b" style="left:692px;top:277px;width:1px;height:20px;background:repeating-linear-gradient(180deg,#bdbdbd 0 1px,transparent 1px 2px);"></div>
<div class="b" style="left:1024px;top:277px;width:1px;height:20px;background:repeating-linear-gradient(180deg,#bdbdbd 0 1px,transparent 1px 2px);"></div>
<div class="b" style="left:480px;top:277px;width:41px;height:20px;background:#e0e9f5;box-sizing:border-box;border-bottom:1.5px solid #a9c0dc;border-right:1px solid #a9c0dc;"></div>
<div class="t" style="left:524.5px;top:280.00px;font-size:13px;color:#000;font-weight:400;line-height:13px;">NAV</div>
<div class="t" style="left:595px;top:280.00px;font-size:13px;color:#000;font-weight:400;line-height:13px;">IKMPsdRot</div>
<div class="b" style="left:521px;top:297px;width:550px;height:19px;background:#fff;"></div>
<div class="b" style="left:521px;top:316px;width:550px;height:1px;background:repeating-linear-gradient(90deg,#bdbdbd 0 1px,transparent 1px 2px);"></div>
<div class="b" style="left:591px;top:297px;width:1px;height:20px;background:repeating-linear-gradient(180deg,#bdbdbd 0 1px,transparent 1px 2px);"></div>
<div class="b" style="left:692px;top:297px;width:1px;height:20px;background:repeating-linear-gradient(180deg,#bdbdbd 0 1px,transparent 1px 2px);"></div>
<div class="b" style="left:1024px;top:297px;width:1px;height:20px;background:repeating-linear-gradient(180deg,#bdbdbd 0 1px,transparent 1px 2px);"></div>
<div class="b" style="left:480px;top:297px;width:41px;height:20px;background:#e0e9f5;box-sizing:border-box;border-bottom:1.5px solid #a9c0dc;border-right:1px solid #a9c0dc;"></div>
<div class="t" style="left:524.5px;top:300.00px;font-size:13px;color:#000;font-weight:400;line-height:13px;">NAV</div>
<div class="t" style="left:595px;top:300.00px;font-size:13px;color:#000;font-weight:400;line-height:13px;">LogCreCol</div>
<div class="b" style="left:521px;top:317px;width:550px;height:19px;background:#ececec;"></div>
<div class="b" style="left:521px;top:336px;width:550px;height:1px;background:repeating-linear-gradient(90deg,#bdbdbd 0 1px,transparent 1px 2px);"></div>
<div class="b" style="left:591px;top:317px;width:1px;height:20px;background:repeating-linear-gradient(180deg,#bdbdbd 0 1px,transparent 1px 2px);"></div>
<div class="b" style="left:692px;top:317px;width:1px;height:20px;background:repeating-linear-gradient(180deg,#bdbdbd 0 1px,transparent 1px 2px);"></div>
<div class="b" style="left:1024px;top:317px;width:1px;height:20px;background:repeating-linear-gradient(180deg,#bdbdbd 0 1px,transparent 1px 2px);"></div>
<div class="b" style="left:480px;top:317px;width:41px;height:20px;background:#e0e9f5;box-sizing:border-box;border-bottom:1.5px solid #a9c0dc;border-right:1px solid #a9c0dc;"></div>
<div class="t" style="left:524.5px;top:320.00px;font-size:13px;color:#000;font-weight:400;line-height:13px;">NAV</div>
<div class="t" style="left:595px;top:320.00px;font-size:13px;color:#000;font-weight:400;line-height:13px;">LogSupPar</div>
<div class="b" style="left:521px;top:337px;width:550px;height:19px;background:#fff;"></div>
<div class="b" style="left:521px;top:356px;width:550px;height:1px;background:repeating-linear-gradient(90deg,#bdbdbd 0 1px,transparent 1px 2px);"></div>
<div class="b" style="left:591px;top:337px;width:1px;height:20px;background:repeating-linear-gradient(180deg,#bdbdbd 0 1px,transparent 1px 2px);"></div>
<div class="b" style="left:692px;top:337px;width:1px;height:20px;background:repeating-linear-gradient(180deg,#bdbdbd 0 1px,transparent 1px 2px);"></div>
<div class="b" style="left:1024px;top:337px;width:1px;height:20px;background:repeating-linear-gradient(180deg,#bdbdbd 0 1px,transparent 1px 2px);"></div>
<div class="b" style="left:480px;top:337px;width:41px;height:20px;background:#e0e9f5;box-sizing:border-box;border-bottom:1.5px solid #a9c0dc;border-right:1px solid #a9c0dc;"></div>
<div class="t" style="left:524.5px;top:340.00px;font-size:13px;color:#000;font-weight:400;line-height:13px;">NAV</div>
<div class="t" style="left:595px;top:340.00px;font-size:13px;color:#000;font-weight:400;line-height:13px;">MntMulGes</div>
<div class="t" style="left:607px;width:400px;text-align:right;top:340.00px;font-size:13px;color:#000;font-weight:400;line-height:13px;">Questionnaires</div>
<div class="t" style="left:1028px;top:340.00px;font-size:13px;color:#000;font-weight:400;line-height:13px;width:43px;overflow:hidden;">TDyMu</div>
<div class="b" style="left:521px;top:357px;width:550px;height:19px;background:#ececec;"></div>
<div class="b" style="left:521px;top:376px;width:550px;height:1px;background:repeating-linear-gradient(90deg,#bdbdbd 0 1px,transparent 1px 2px);"></div>
<div class="b" style="left:591px;top:357px;width:1px;height:20px;background:repeating-linear-gradient(180deg,#bdbdbd 0 1px,transparent 1px 2px);"></div>
<div class="b" style="left:692px;top:357px;width:1px;height:20px;background:repeating-linear-gradient(180deg,#bdbdbd 0 1px,transparent 1px 2px);"></div>
<div class="b" style="left:1024px;top:357px;width:1px;height:20px;background:repeating-linear-gradient(180deg,#bdbdbd 0 1px,transparent 1px 2px);"></div>
<div class="b" style="left:480px;top:357px;width:41px;height:20px;background:#e0e9f5;box-sizing:border-box;border-bottom:1.5px solid #a9c0dc;border-right:1px solid #a9c0dc;"></div>
<div class="t" style="left:524.5px;top:360.00px;font-size:13px;color:#000;font-weight:400;line-height:13px;">SDD</div>
<div class="t" style="left:595px;top:360.00px;font-size:13px;color:#000;font-weight:400;line-height:13px;">IMDCDefM</div>
<div class="t" style="left:1028px;top:360.00px;font-size:13px;color:#000;font-weight:400;line-height:13px;width:43px;overflow:hidden;">ISIA</div>
<div class="b" style="left:521px;top:377px;width:550px;height:19px;background:#fff;"></div>
<div class="b" style="left:521px;top:396px;width:550px;height:1px;background:repeating-linear-gradient(90deg,#bdbdbd 0 1px,transparent 1px 2px);"></div>
<div class="b" style="left:591px;top:377px;width:1px;height:20px;background:repeating-linear-gradient(180deg,#bdbdbd 0 1px,transparent 1px 2px);"></div>
<div class="b" style="left:692px;top:377px;width:1px;height:20px;background:repeating-linear-gradient(180deg,#bdbdbd 0 1px,transparent 1px 2px);"></div>
<div class="b" style="left:1024px;top:377px;width:1px;height:20px;background:repeating-linear-gradient(180deg,#bdbdbd 0 1px,transparent 1px 2px);"></div>
<div class="b" style="left:480px;top:377px;width:41px;height:20px;background:#e0e9f5;box-sizing:border-box;border-bottom:1.5px solid #a9c0dc;border-right:1px solid #a9c0dc;"></div>
<div class="t" style="left:524.5px;top:380.00px;font-size:13px;color:#000;font-weight:400;line-height:13px;">SDD</div>
<div class="t" style="left:595px;top:380.00px;font-size:13px;color:#000;font-weight:400;line-height:13px;">IMDDefGrp</div>
<div class="t" style="left:1028px;top:380.00px;font-size:13px;color:#000;font-weight:400;line-height:13px;width:43px;overflow:hidden;">ISIA</div>
<div class="b" style="left:521px;top:397px;width:550px;height:19px;background:#ececec;"></div>
<div class="b" style="left:521px;top:416px;width:550px;height:1px;background:repeating-linear-gradient(90deg,#bdbdbd 0 1px,transparent 1px 2px);"></div>
<div class="b" style="left:591px;top:397px;width:1px;height:20px;background:repeating-linear-gradient(180deg,#bdbdbd 0 1px,transparent 1px 2px);"></div>
<div class="b" style="left:692px;top:397px;width:1px;height:20px;background:repeating-linear-gradient(180deg,#bdbdbd 0 1px,transparent 1px 2px);"></div>
<div class="b" style="left:1024px;top:397px;width:1px;height:20px;background:repeating-linear-gradient(180deg,#bdbdbd 0 1px,transparent 1px 2px);"></div>
<div class="b" style="left:480px;top:397px;width:41px;height:20px;background:#e0e9f5;box-sizing:border-box;border-bottom:1.5px solid #a9c0dc;border-right:1px solid #a9c0dc;"></div>
<div class="t" style="left:524.5px;top:400.00px;font-size:13px;color:#000;font-weight:400;line-height:13px;">SDD</div>
<div class="t" style="left:595px;top:400.00px;font-size:13px;color:#000;font-weight:400;line-height:13px;">IMDDefGrp</div>
<div class="t" style="left:1028px;top:400.00px;font-size:13px;color:#000;font-weight:400;line-height:13px;width:43px;overflow:hidden;">ISIA</div>
<div class="b" style="left:521px;top:417px;width:550px;height:19px;background:#fff;"></div>
<div class="b" style="left:521px;top:436px;width:550px;height:1px;background:repeating-linear-gradient(90deg,#bdbdbd 0 1px,transparent 1px 2px);"></div>
<div class="b" style="left:591px;top:417px;width:1px;height:20px;background:repeating-linear-gradient(180deg,#bdbdbd 0 1px,transparent 1px 2px);"></div>
<div class="b" style="left:692px;top:417px;width:1px;height:20px;background:repeating-linear-gradient(180deg,#bdbdbd 0 1px,transparent 1px 2px);"></div>
<div class="b" style="left:1024px;top:417px;width:1px;height:20px;background:repeating-linear-gradient(180deg,#bdbdbd 0 1px,transparent 1px 2px);"></div>
<div class="b" style="left:480px;top:417px;width:41px;height:20px;background:#e0e9f5;box-sizing:border-box;border-bottom:1.5px solid #a9c0dc;border-right:1px solid #a9c0dc;"></div>
<div class="t" style="left:524.5px;top:420.00px;font-size:13px;color:#000;font-weight:400;line-height:13px;">SDD</div>
<div class="t" style="left:595px;top:420.00px;font-size:13px;color:#000;font-weight:400;line-height:13px;">IMDDefMod</div>
<div class="t" style="left:1028px;top:420.00px;font-size:13px;color:#000;font-weight:400;line-height:13px;width:43px;overflow:hidden;">ISIA</div>
<div class="b" style="left:521px;top:437px;width:550px;height:19px;background:#ececec;"></div>
<div class="b" style="left:521px;top:456px;width:550px;height:1px;background:#c8c8c8;"></div>
<div class="b" style="left:591px;top:437px;width:1px;height:20px;background:repeating-linear-gradient(180deg,#bdbdbd 0 1px,transparent 1px 2px);"></div>
<div class="b" style="left:692px;top:437px;width:1px;height:20px;background:repeating-linear-gradient(180deg,#bdbdbd 0 1px,transparent 1px 2px);"></div>
<div class="b" style="left:1024px;top:437px;width:1px;height:20px;background:repeating-linear-gradient(180deg,#bdbdbd 0 1px,transparent 1px 2px);"></div>
<div class="b" style="left:480px;top:437px;width:41px;height:20px;background:#e0e9f5;box-sizing:border-box;border-bottom:1.5px solid #a9c0dc;border-right:1px solid #a9c0dc;"></div>
<div class="t" style="left:524.5px;top:440.00px;font-size:13px;color:#000;font-weight:400;line-height:13px;">SDD</div>
<div class="t" style="left:595px;top:440.00px;font-size:13px;color:#000;font-weight:400;line-height:13px;">IMDDefMod</div>
<div class="t" style="left:1028px;top:440.00px;font-size:13px;color:#000;font-weight:400;line-height:13px;width:43px;overflow:hidden;">ISIA</div>
<div class="b" style="left:590.5px;top:237.5px;width:103.5px;height:20.5px;background:transparent;box-sizing:border-box;border:2px solid #161616;"></div>
<div class="b" style="left:1071px;top:215px;width:20px;height:554px;background:#7097c0;"></div>
<div class="b" style="left:1071.5px;top:215.5px;width:19.5px;height:19.5px;background:linear-gradient(90deg,#d4e2f4 50%,#bcd2ee 50%);box-sizing:border-box;border:1px solid #5a7aa8;"></div>
<svg class="b" style="left:1075px;top:220px;" width="12" height="8" viewBox="0 0 12 8"><path d="M0.5 7.5 L6 1 L11.5 7.5 Z" fill="#3c4a6a"/></svg>
<div class="b" style="left:1071.5px;top:748px;width:19.5px;height:22px;background:linear-gradient(90deg,#d4e2f4 50%,#bcd2ee 50%);box-sizing:border-box;border:1px solid #5a7aa8;"></div>
<div class="b" style="left:1091px;top:214px;width:1px;height:555px;background:#555;"></div>
<div class="b" style="left:1092.5px;top:214px;width:21px;height:555px;background:#f0f0f0;"></div>
<svg class="b" style="left:1092px;top:225px;" width="21" height="544" viewBox="0 0 21 544"><path d="M8.5 544 V16.6 H15 L21 3.8" fill="#f0f0f0" stroke="#a0a0a0" stroke-width="1.2"/></svg>
<div class="t" style="left:1109px;top:428.00px;font-size:13px;color:#000;font-weight:400;line-height:13px;">T</div>
<div class="b" style="left:656px;top:248px;width:315px;height:436px;background:#f0f0f0;box-sizing:border-box;border:1px solid #a0a0a0;"></div>
<div class="b" style="left:694.5px;top:420px;width:273px;height:1px;background:#d7d7d7;"></div>
<div class="b" style="left:694.5px;top:456.5px;width:273px;height:1px;background:#d7d7d7;"></div>
<div class="b" style="left:694.5px;top:492.5px;width:273px;height:1px;background:#d7d7d7;"></div>
<div class="b" style="left:694.5px;top:557px;width:273px;height:1px;background:#d7d7d7;"></div>
<div class="b" style="left:694.5px;top:620px;width:273px;height:1px;background:#d7d7d7;"></div>
<div class="b" style="left:659.5px;top:462px;width:308px;height:27px;background:#91c9f7;"></div>
<div class="b" style="left:691.5px;top:462px;width:153.5px;height:27px;background:#8cc465;"></div>
<div class="t" style="left:700.3px;top:258.65px;font-size:14px;color:#000;font-weight:400;line-height:14px;letter-spacing:0.087px;">Création (F9)</div>
<div class="t" style="left:700.3px;top:285.95px;font-size:14px;color:#000;font-weight:400;line-height:14px;letter-spacing:0.45px;">Modification (F1)</div>
<div class="t" style="left:700.3px;top:312.95px;font-size:14px;color:#000;font-weight:400;line-height:14px;letter-spacing:0.45px;">Modification Globale (Maj+F1)</div>
<div class="t" style="left:700.3px;top:341.15px;font-size:14px;color:#000;font-weight:400;line-height:14px;letter-spacing:0.317px;">Duplication (F7)</div>
<div class="t" style="left:700.3px;top:368.55px;font-size:14px;color:#000;font-weight:400;line-height:14px;">Suppression (F6)</div>
<div class="t" style="left:700.3px;top:395.85px;font-size:14px;color:#000;font-weight:400;line-height:14px;letter-spacing:-0.06px;">Détail (F8)</div>
<div class="t" style="left:700.3px;top:432.25px;font-size:14px;color:#000;font-weight:400;line-height:14px;letter-spacing:0.087px;">Accès Requête(s) (Ctrl+F10)</div>
<div class="t" style="left:700.3px;top:467.85px;font-size:14px;color:#000;font-weight:400;line-height:14px;letter-spacing:0.107px;">Test Procédure (F11)</div>
<div class="t" style="left:700.3px;top:504.85px;font-size:14px;color:#000;font-weight:400;line-height:14px;letter-spacing:0.296px;">Cas d'Emploi dans les Actions</div>
<div class="t" style="left:700.3px;top:532.15px;font-size:14px;color:#000;font-weight:400;line-height:14px;letter-spacing:0.308px;">Créer un raccourci</div>
<div class="t" style="left:700.3px;top:568.55px;font-size:14px;color:#000;font-weight:400;line-height:14px;letter-spacing:0.307px;">Exportation</div>
<div class="t" style="left:700.3px;top:596.15px;font-size:14px;color:#000;font-weight:400;line-height:14px;letter-spacing:0.448px;">Importation de Données</div>
<div class="t" style="left:700.3px;top:632.35px;font-size:14px;color:#000;font-weight:400;line-height:14px;letter-spacing:0.262px;">Définition Filtres et Tris</div>
<div class="t" style="left:700.3px;top:659.55px;font-size:14px;color:#000;font-weight:400;line-height:14px;letter-spacing:0.479px;">Condition par Défaut</div>
<svg class="b" style="left:949px;top:569px;" width="8" height="12" viewBox="0 0 8 12"><path d="M1.5 1.5 L6 6 L1.5 10.5" fill="none" stroke="#333" stroke-width="1.2"/></svg>
<svg class="b" style="left:883.7px;top:470.6px;" width="16" height="23" viewBox="0 0 16 23"><path d="M1 1 V17.5 L4.8 13.8 L7.6 20.2 L10.2 19 L7.5 12.8 H12.8 Z" fill="#fff" stroke="#000" stroke-width="1.1" stroke-linejoin="round"/></svg>
</body></html>
